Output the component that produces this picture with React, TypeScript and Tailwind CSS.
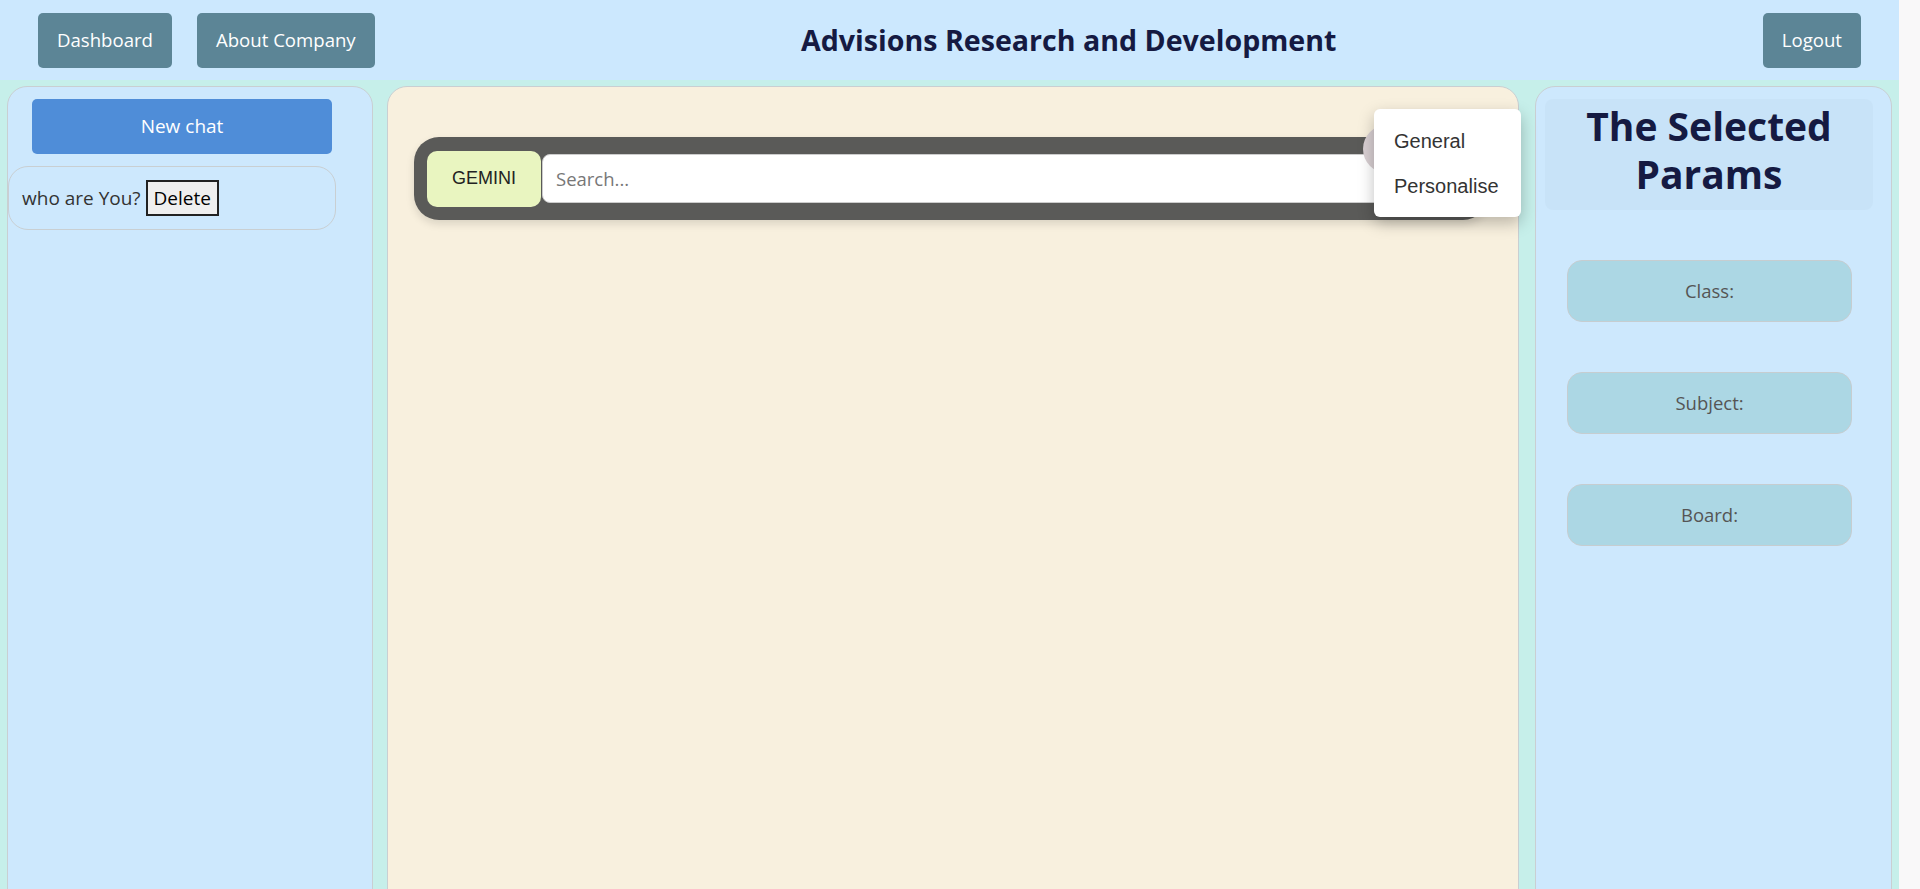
import React from "react";

const ui = "font-['Open_Sans','Noto_Sans',sans-serif]";
const heading = "font-['Open_Sans','Noto_Sans',sans-serif] font-bold text-[#151a42]";

const NavButton = ({ label }: { label: string }) => (
  <button className={`h-[55px] px-[19px] rounded-[5px] bg-[#5c8596] text-white text-[18.6px] ${ui}`}>
    {label}
  </button>
);

const ParamBox = ({ label }: { label: string }) => (
  <div
    className={`ml-[31px] w-[285px] h-[62px] rounded-[15px] border border-[#c6cdd0] bg-[#acd7e4] flex items-center justify-center text-[18.5px] text-[#555] ${ui}`}
  >
    {label}
  </div>
);

export default function App() {
  return (
    <div className="w-full h-screen overflow-hidden bg-[#f9f8f9]">
      <div className="w-[1899px] h-full flex flex-col">
        {/* Header */}
        <header className="h-[80px] shrink-0 bg-[#cce8fe] flex items-center justify-between px-[38px]">
          <div className="flex items-center gap-[25px]">
            <NavButton label="Dashboard" />
            <NavButton label="About Company" />
          </div>
          <h1 className={`text-[28.6px] ${heading}`}>Advisions Research and Development</h1>
          <NavButton label="Logout" />
        </header>

        {/* Body */}
        <main className="flex-1 flex bg-[#c6efea] pt-[6px] px-[7px]">
          {/* Chat history */}
          <aside className="w-[366px] h-[830px] shrink-0 rounded-[20px] border border-[#c9cfd2] bg-[#cde8fd] pt-[12px]">
            <button
              className={`ml-[24px] w-[300px] h-[55px] rounded-[5px] bg-[#4f8dd8] text-white text-[19px] ${ui}`}
            >
              New chat
            </button>
            <div className="mt-[12px] w-[328px] h-[64px] rounded-[20px] border border-[#c9cfd2] flex items-center pl-[13px]">
              <span className={`text-[19px] text-[#333] ${ui}`}>who are You?</span>
              <button
                className={`ml-[5px] h-[36px] px-[6px] border-2 border-[#222] bg-[#efefef] text-[19px] text-black ${ui}`}
              >
                Delete
              </button>
            </div>
          </aside>

          {/* Chat area */}
          <section className="relative ml-[14px] w-[1132px] h-[830px] shrink-0 rounded-[20px] border border-[#c9cfd2] bg-[#f8f0de]">
            <div className="mt-[50px] ml-[26px] w-[1074px] h-[83px] rounded-[25px] bg-[#5a5a58] shadow-[0_4px_8px_rgba(0,0,0,0.12)] flex items-center pl-[13px] pr-[30px]">
              <button
                className="w-[114px] h-[56px] rounded-[10px] bg-[#e9f5c0] text-[#222] text-[18px] font-['Liberation_Sans',Arial,sans-serif]"
              >
                GEMINI
              </button>
              <input
                placeholder="Search..."
                className={`ml-[1px] flex-1 h-[49px] rounded-[8px] bg-white border border-[#ccc] px-[13px] text-[18.5px] text-[#333] placeholder:text-[#777] outline-none ${ui}`}
              />
            </div>

            {/* model toggle */}
            <div className="absolute left-[975px] top-[38px] w-[48px] h-[48px] rounded-full bg-[#d8cfd2]" />

            {/* dropdown */}
            <div className="absolute left-[986px] top-[22px] w-[147px] rounded-[6px] bg-white shadow-[0_6px_16px_rgba(0,0,0,0.25)] py-[9px] font-['Liberation_Sans',Arial,sans-serif] text-[20px] text-[#333]">
              <div className="h-[45px] flex items-center px-[20px]">General</div>
              <div className="h-[45px] flex items-center px-[20px]">Personalise</div>
            </div>
          </section>

          {/* Params */}
          <aside className="ml-[16px] w-[357px] h-[830px] shrink-0 rounded-[20px] border border-[#c9cfd2] bg-[#cde8fd] pt-[12px]">
            <div className="ml-[9px] w-[328px] h-[111px] rounded-[8px] bg-[#c8e3f8] flex items-center justify-center pb-[10px]">
              <h2 className={`text-[39px] leading-[48px] text-center ${heading}`}>
                The Selected
                <br />
                Params
              </h2>
            </div>
            <div className="mt-[50px] flex flex-col gap-[50px]">
              <ParamBox label="Class:" />
              <ParamBox label="Subject:" />
              <ParamBox label="Board:" />
            </div>
          </aside>
        </main>
      </div>
    </div>
  );
}
